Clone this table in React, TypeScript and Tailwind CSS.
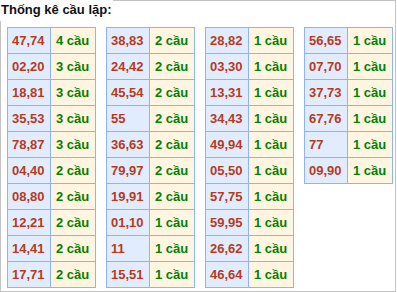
const tables: [string, number][][] = [
  [
    ["47,74", 4],
    ["02,20", 3],
    ["18,81", 3],
    ["35,53", 3],
    ["78,87", 3],
    ["04,40", 2],
    ["08,80", 2],
    ["12,21", 2],
    ["14,41", 2],
    ["17,71", 2],
  ],
  [
    ["38,83", 2],
    ["24,42", 2],
    ["45,54", 2],
    ["55", 2],
    ["36,63", 2],
    ["79,97", 2],
    ["19,91", 2],
    ["01,10", 1],
    ["11", 1],
    ["15,51", 1],
  ],
  [
    ["28,82", 1],
    ["03,30", 1],
    ["13,31", 1],
    ["34,43", 1],
    ["49,94", 1],
    ["05,50", 1],
    ["57,75", 1],
    ["59,95", 1],
    ["26,62", 1],
    ["46,64", 1],
  ],
  [
    ["56,65", 1],
    ["07,70", 1],
    ["37,73", 1],
    ["67,76", 1],
    ["77", 1],
    ["09,90", 1],
  ],
]

function StatTable({ rows }: { rows: [string, number][] }) {
  return (
    <div className="grid grid-cols-[42px_44px] gap-px bg-[#8fb3f5] p-px self-start">
      {rows.map(([pair, count]) => (
        <div key={pair} className="contents">
          <div className="h-[25px] leading-[26px] pl-[4px] bg-[#e1edff] text-[#b83a1c]">{pair}</div>
          <div className="h-[25px] leading-[26px] pl-[5px] bg-[#fff5e1] text-[#048004]">{count} cầu</div>
        </div>
      ))}
    </div>
  )
}

export default function App() {
  return (
    <div className="w-[397px] h-[292px] bg-white font-['Liberation_Sans',Arial,sans-serif] text-[13px] font-bold">
      <div className="w-[396px] h-[292px] border border-[#c3c3c3]">
        <div className="-mt-px -ml-px h-[21px] w-fit bg-white pl-[1px] pr-[1px] leading-[19px] text-[#111]">
          Thống kê cầu lặp:
        </div>
        <div className="mt-[6px] pl-[6px] flex gap-[10px]">
          {tables.map((rows, i) => (
            <StatTable key={i} rows={rows} />
          ))}
        </div>
      </div>
    </div>
  )
}
